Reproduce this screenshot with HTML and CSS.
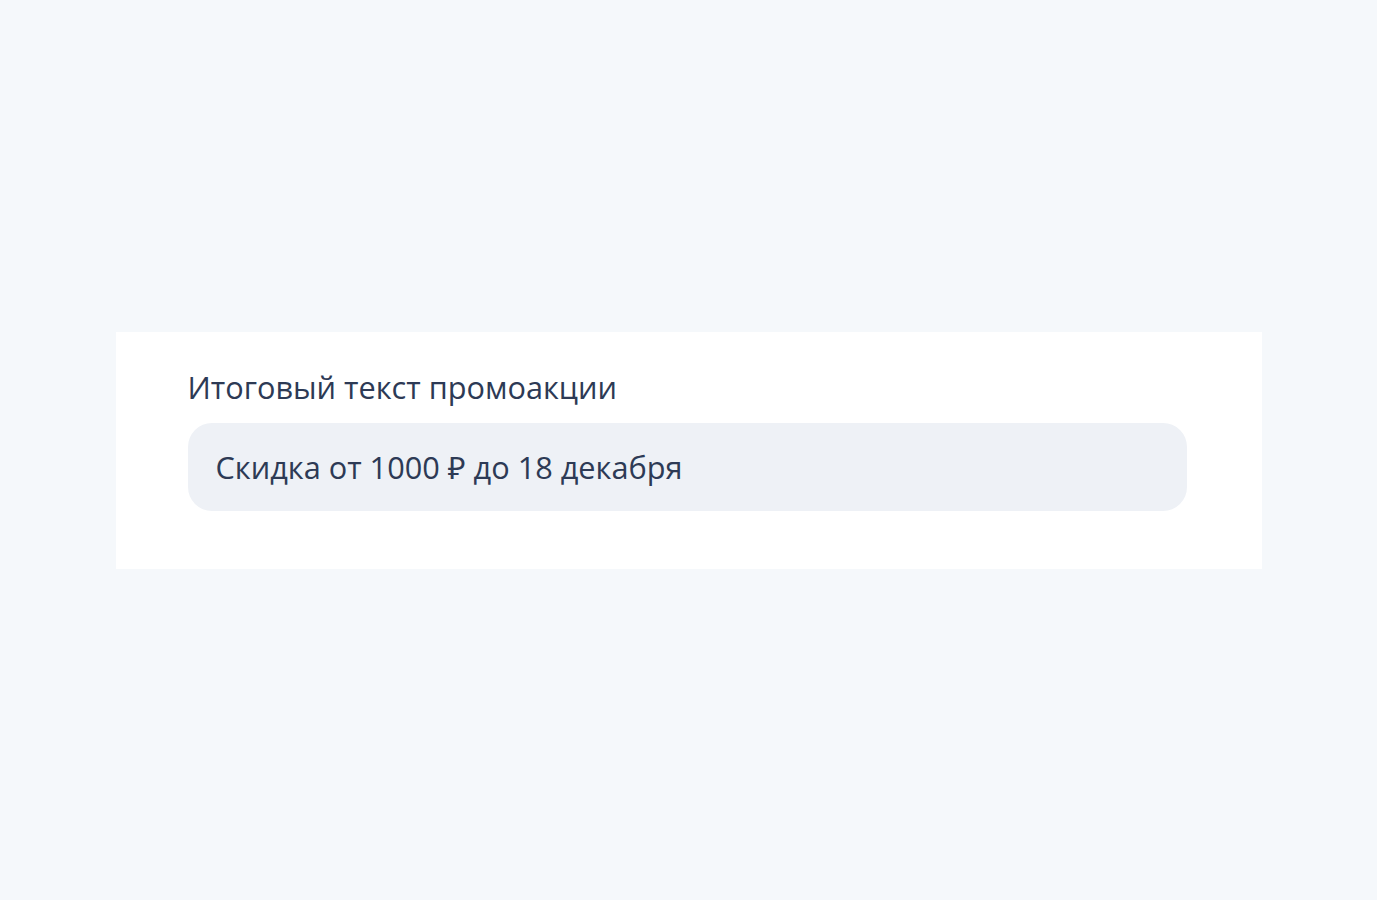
FILE: index.html
```html
<!DOCTYPE html>
<html lang="ru">
<head>
<meta charset="utf-8">
<link rel="stylesheet" href="styles.css">
</head>
<body>
<main class="page">
  <section class="card">
    <div class="label">Итоговый текст промоакции</div>
    <div class="field">Скидка от 1000 ₽ до 18&nbsp;декабря</div>
  </section>
</main>
</body>
</html>
```
FILE: styles.css
```css
html, body {
  margin: 0;
  padding: 0;
  background: #f5f8fb;
}
.page {
  min-height: 900px;
  display: flex;
  align-items: center;
  justify-content: center;
}
.card {
  width: 1146px;
  box-sizing: border-box;
  background: #ffffff;
  padding: 34px 75px 58px 72px;
  font-family: "Open Sans", "Noto Sans", sans-serif;
  color: #2d3a55;
}
.label {
  font-size: 30.7px;
  line-height: 42px;
  margin-bottom: 15px;
}
.field {
  height: 88px;
  box-sizing: border-box;
  background: #eef1f6;
  border-radius: 24px;
  padding: 0 28px;
  display: flex;
  align-items: center;
  font-size: 30.7px;
}
```
